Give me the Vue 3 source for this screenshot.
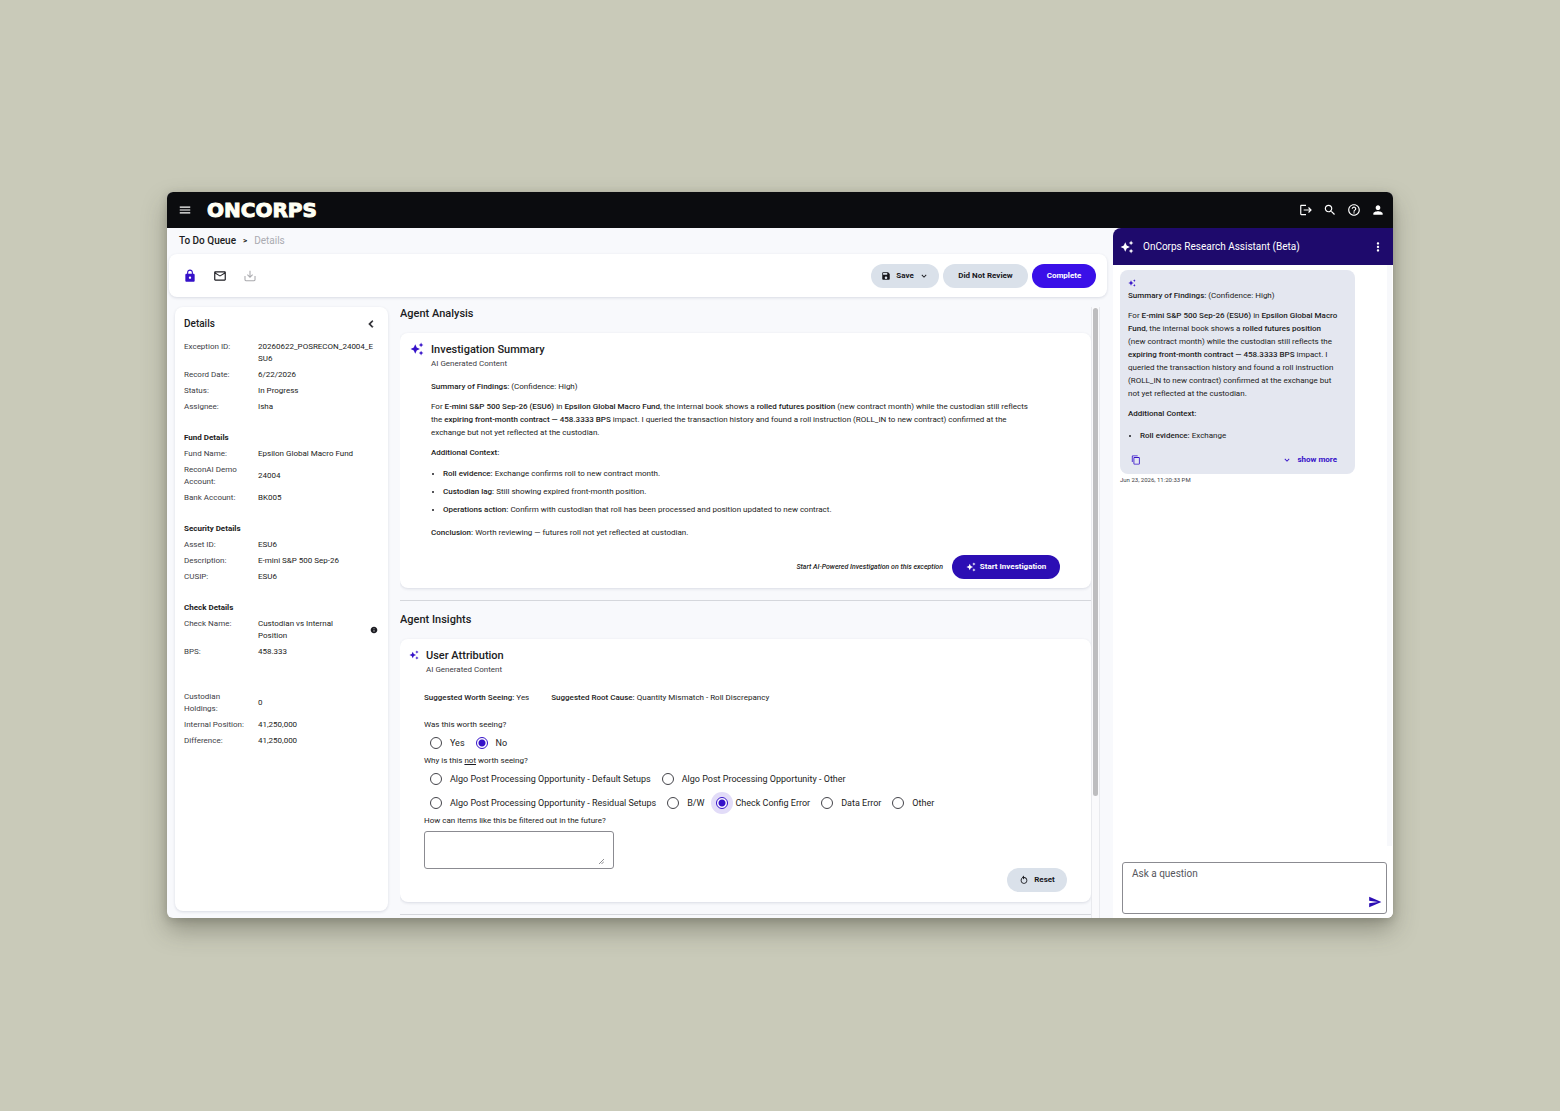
<script setup>
import { ref } from 'vue'

const icons = {
  menu: 'M3 18h18v-2H3v2zm0-5h18v-2H3v2zm0-7v2h18V6H3z',
  logout: 'M17 7l-1.41 1.41L18.17 11H8v2h10.17l-2.58 2.58L17 17l5-5zM4 5h8V3H4c-1.1 0-2 .9-2 2v14c0 1.1.9 2 2 2h8v-2H4V5z',
  search: 'M15.5 14h-.79l-.28-.27C15.41 12.59 16 11.11 16 9.5 16 5.91 13.09 3 9.5 3S3 5.91 3 9.5 5.91 16 9.5 16c1.61 0 3.09-.59 4.23-1.57l.27.28v.79l5 4.99L20.49 19l-4.99-5zm-6 0C7.01 14 5 11.99 5 9.5S7.01 5 9.5 5 14 7.01 14 9.5 11.99 14 9.5 14z',
  help: 'M11 18h2v-2h-2v2zm1-16C6.48 2 2 6.48 2 12s4.48 10 10 10 10-4.48 10-10S17.52 2 12 2zm0 18c-4.41 0-8-3.59-8-8s3.59-8 8-8 8 3.59 8 8-3.59 8-8 8zm0-14c-2.21 0-4 1.79-4 4h2c0-1.1.9-2 2-2s2 .9 2 2c0 2-3 1.75-3 5h2c0-2.25 3-2.5 3-5 0-2.21-1.79-4-4-4z',
  person: 'M12 12c2.21 0 4-1.79 4-4s-1.79-4-4-4-4 1.79-4 4 1.79 4 4 4zm0 2c-2.67 0-8 1.34-8 4v2h16v-2c0-2.66-5.33-4-8-4z',
  lock: 'M18 8h-1V6c0-2.76-2.24-5-5-5S7 3.24 7 6v2H6c-1.1 0-2 .9-2 2v10c0 1.1.9 2 2 2h12c1.1 0 2-.9 2-2V10c0-1.1-.9-2-2-2zm-6 9c-1.1 0-2-.9-2-2s.9-2 2-2 2 .9 2 2-.9 2-2 2zm3.1-9H8.9V6c0-1.71 1.39-3.1 3.1-3.1 1.71 0 3.1 1.39 3.1 3.1v2z',
  mail: 'M22 6c0-1.1-.9-2-2-2H4c-1.1 0-2 .9-2 2v12c0 1.1.9 2 2 2h16c1.1 0 2-.9 2-2V6zm-2 0l-8 5-8-5h16zm0 12H4V8l8 5 8-5v10z',
  download: 'M11.1 3h1.8v9.2l3-3 1.2 1.2-5.1 5.2-5.1-5.2 1.2-1.2 3 3zM2.5 12h1.8v6.2q0 1 1 1h13.4q1 0 1-1V12h1.8v6.5Q21.5 21 19 21H5Q2.5 21 2.5 18.5z',
  save: 'M17 3H5c-1.11 0-2 .9-2 2v14c0 1.1.89 2 2 2h14c1.1 0 2-.9 2-2V7l-4-4zm-5 16c-1.66 0-3-1.34-3-3s1.34-3 3-3 3 1.34 3 3-1.34 3-3 3zm3-10H5V5h10v4z',
  down: 'M16.59 8.59L12 13.17 7.41 8.59 6 10l6 6 6-6z',
  left: 'M15.41 7.41L14 6l-6 6 6 6 1.41-1.41L10.83 12z',
  more: 'M12 8c1.1 0 2-.9 2-2s-.9-2-2-2-2 .9-2 2 .9 2 2 2zm0 2c-1.1 0-2 .9-2 2s.9 2 2 2 2-.9 2-2-.9-2-2-2zm0 6c-1.1 0-2 .9-2 2s.9 2 2 2 2-.9 2-2-.9-2-2-2z',
  sparkle: 'M19 9l1.25-2.75L23 5l-2.75-1.25L19 1l-1.25 2.75L15 5l2.75 1.25L19 9zm-7.5.5L9 4 6.5 9.5 1 12l5.5 2.5L9 20l2.5-5.5L17 12l-5.5-2.5zM19 15l-1.25 2.75L15 19l2.75 1.25L19 23l1.25-2.75L23 19l-2.75-1.25L19 15z',
  info: 'M12 2C6.48 2 2 6.48 2 12s4.48 10 10 10 10-4.48 10-10S17.52 2 12 2zm1 15h-2v-6h2v6zm0-8h-2V7h2v2z',
  copy: 'M16 1H4c-1.1 0-2 .9-2 2v14h2V3h12V1zm3 4H8c-1.1 0-2 .9-2 2v14c0 1.1.9 2 2 2h11c1.1 0 2-.9 2-2V7c0-1.1-.9-2-2-2zm0 16H8V7h11v14z',
  send: 'M2.01 21L23 12 2.01 3 2 10l15 2-15 2z',
  reset: 'M12 5V1L7 6l5 5V7c3.31 0 6 2.69 6 6s-2.69 6-6 6-6-2.69-6-6c0-1.65.67-3.15 1.76-4.24L6.34 7.34A7.98 7.98 0 0 0 4 13c0 4.42 3.58 8 8 8s8-3.58 8-8-3.58-8-8-8z',
}

const groups = [
  { title: '', rows: [
    ['Exception ID:', '20260622_POSRECON_24004_ESU6'],
    ['Record Date:', '6/22/2026'],
    ['Status:', 'In Progress'],
    ['Assignee:', 'Isha'],
  ] },
  { title: 'Fund Details', rows: [
    ['Fund Name:', 'Epsilon Global Macro Fund'],
    ['ReconAI Demo Account:', '24004'],
    ['Bank Account:', 'BK005'],
  ] },
  { title: 'Security Details', rows: [
    ['Asset ID:', 'ESU6'],
    ['Description:', 'E-mini S&P 500 Sep-26'],
    ['CUSIP:', 'ESU6'],
  ] },
  { title: 'Check Details', rows: [
    ['Check Name:', 'Custodian vs Internal Position', true],
    ['BPS:', '458.333'],
  ] },
  { title: '', rows: [
    ['Custodian Holdings:', '0'],
    ['Internal Position:', '41,250,000'],
    ['Difference:', '41,250,000'],
  ] },
]

const reasonRows = [
  ['Algo Post Processing Opportunity - Default Setups', 'Algo Post Processing Opportunity - Other'],
  ['Algo Post Processing Opportunity - Residual Setups', 'B/W', 'Check Config Error', 'Data Error', 'Other'],
]

const worth = ref('No')
const reason = ref('Check Config Error')
const feedback = ref('')
const question = ref('')
</script>

<template>
  <div class="stage">
    <div class="window">
      <header class="topbar">
        <button class="icon-btn" aria-label="Menu"><svg class="i14" viewBox="0 0 24 24"><path :d="icons.menu" /></svg></button>
        <span class="logo">ONCORPS</span>
        <nav class="top-actions">
          <button v-for="n in ['logout', 'search', 'help', 'person']" :key="n" class="icon-btn" :aria-label="n">
            <svg class="i14" viewBox="0 0 24 24"><path :d="icons[n]" /></svg>
          </button>
        </nav>
      </header>

      <div class="body">
        <section class="workspace">
          <nav class="crumbs"><a href="#">To Do Queue</a><b>&gt;</b><span>Details</span></nav>

          <div class="toolbar">
            <div class="tools">
              <button class="icon-btn accent" aria-label="Lock"><svg class="i14" viewBox="0 0 24 24"><path :d="icons.lock" /></svg></button>
              <button class="icon-btn" aria-label="Mail"><svg class="i14" viewBox="0 0 24 24"><path :d="icons.mail" /></svg></button>
              <button class="icon-btn faded" aria-label="Download"><svg class="i14" viewBox="0 0 24 24"><path :d="icons.download" /></svg></button>
            </div>
            <div class="actions">
              <button class="pill save">
                <svg class="i10" viewBox="0 0 24 24"><path :d="icons.save" /></svg>Save
                <svg class="i10" viewBox="0 0 24 24"><path :d="icons.down" /></svg>
              </button>
              <button class="pill review">Did Not Review</button>
              <button class="pill complete">Complete</button>
            </div>
          </div>

          <div class="columns">
            <aside class="details">
              <div class="details-head">
                <h2>Details</h2>
                <button class="icon-btn" aria-label="Collapse"><svg class="i14" viewBox="0 0 24 24"><path :d="icons.left" stroke="currentColor" /></svg></button>
              </div>
              <div v-for="(g, i) in groups" :key="i" class="group" :class="{ spaced: i === 4 }">
                <h3 v-if="g.title">{{ g.title }}</h3>
                <dl>
                  <div v-for="r in g.rows" :key="r[0]" class="row">
                    <dt>{{ r[0] }}</dt>
                    <dd :class="{ short: r[2], code: r[1].length === 28 }">{{ r[1] }}</dd>
                    <svg v-if="r[2]" class="i8" viewBox="0 0 24 24"><path :d="icons.info" /></svg>
                  </div>
                </dl>
              </div>
            </aside>

            <main class="content">
              <h2 class="section-title">Agent Analysis</h2>
              <article class="card analysis">
                <svg class="i14 accent" viewBox="0 0 24 24"><path :d="icons.sparkle" /></svg>
                <div class="card-main">
                  <h3 class="card-title">Investigation Summary</h3>
                  <p class="subtitle">AI Generated Content</p>
                  <div class="prose">
                    <p><strong>Summary of Findings:</strong> (Confidence: High)</p>
                    <p>For <strong>E-mini S&amp;P 500 Sep-26 (ESU6)</strong> in <strong>Epsilon Global Macro Fund</strong>, the internal book shows a <strong>rolled futures position</strong> (new contract month) while the custodian still reflects the <strong>expiring front-month contract — 458.3333 BPS</strong> impact. I queried the transaction history and found a roll instruction (ROLL_IN to new contract) confirmed at the exchange but not yet reflected at the custodian.</p>
                    <p><strong>Additional Context:</strong></p>
                    <ul>
                      <li><strong>Roll evidence:</strong> Exchange confirms roll to new contract month.</li>
                      <li><strong>Custodian lag:</strong> Still showing expired front-month position.</li>
                      <li><strong>Operations action:</strong> Confirm with custodian that roll has been processed and position updated to new contract.</li>
                    </ul>
                    <p><strong>Conclusion:</strong> Worth reviewing — futures roll not yet reflected at custodian.</p>
                  </div>
                  <div class="launch">
                    <em>Start AI-Powered Investigation on this exception</em>
                    <button class="pill start"><svg class="i10" viewBox="0 0 24 24"><path :d="icons.sparkle" /></svg>Start Investigation</button>
                  </div>
                </div>
              </article>

              <hr />
              <h2 class="section-title">Agent Insights</h2>
              <article class="card insights">
                <div class="insights-head">
                  <svg class="i10 accent" viewBox="0 0 24 24"><path :d="icons.sparkle" /></svg>
                  <div>
                    <h3 class="card-title">User Attribution</h3>
                    <p class="subtitle">AI Generated Content</p>
                  </div>
                </div>
                <form class="form" @submit.prevent>
                  <p class="suggestions">
                    <span><strong>Suggested Worth Seeing:</strong> Yes</span>
                    <span><strong>Suggested Root Cause:</strong> Quantity Mismatch - Roll Discrepancy</span>
                  </p>
                  <p class="question">Was this worth seeing?</p>
                  <div class="radios">
                    <label v-for="o in ['Yes', 'No']" :key="o"><input v-model="worth" type="radio" name="worth" :value="o" />{{ o }}</label>
                  </div>
                  <p class="question">Why is this <u>not</u> worth seeing?</p>
                  <div v-for="(r, i) in reasonRows" :key="i" class="radios">
                    <label v-for="o in r" :key="o"><input v-model="reason" type="radio" name="reason" class="halo" :value="o" />{{ o }}</label>
                  </div>
                  <label class="question" for="feedback">How can items like this be filtered out in the future?</label>
                  <div class="feedback">
                    <textarea id="feedback" v-model="feedback"></textarea>
                    <svg viewBox="0 0 6 6"><path d="M0 6L6 0M3 6L6 3" /></svg>
                  </div>
                  <button class="pill reset" type="reset"><svg class="i10" viewBox="0 0 24 24"><path :d="icons.reset" /></svg>Reset</button>
                </form>
              </article>
              <hr />
            </main>
            <div class="track"><div class="thumb"></div></div>
          </div>
        </section>

        <aside class="assistant">
          <div class="assistant-head">
            <svg class="i14" viewBox="0 0 24 24"><path :d="icons.sparkle" /></svg>
            <h2>OnCorps Research Assistant (Beta)</h2>
            <button class="icon-btn" aria-label="More"><svg class="i14" viewBox="0 0 24 24"><path :d="icons.more" /></svg></button>
          </div>
          <div class="thread">
            <div class="messages">
              <div class="bubble prose">
                <svg class="i8 accent" viewBox="0 0 24 24"><path :d="icons.sparkle" /></svg>
                <p><strong>Summary of Findings:</strong> (Confidence: High)</p>
                <p>For <strong>E-mini S&amp;P 500 Sep-26 (ESU6)</strong> in <strong>Epsilon Global Macro Fund</strong>, the internal book shows a <strong>rolled futures position</strong> (new contract month) while the custodian still reflects the <strong>expiring front-month contract — 458.3333 BPS</strong> impact. I queried the transaction history and found a roll instruction (ROLL_IN to new contract) confirmed at the exchange but not yet reflected at the custodian.</p>
                <p><strong>Additional Context:</strong></p>
                <ul><li><strong>Roll evidence:</strong> Exchange</li></ul>
                <div class="bubble-foot">
                  <button class="icon-btn accent" aria-label="Copy"><svg class="i10" viewBox="0 0 24 24"><path :d="icons.copy" /></svg></button>
                  <button class="show-more"><svg class="i10" viewBox="0 0 24 24"><path :d="icons.down" /></svg>show more</button>
                </div>
              </div>
              <time>Jun 23, 2026, 11:20:33 PM</time>
            </div>
          </div>
          <div class="ask">
            <textarea v-model="question" aria-label="Ask a question" placeholder="Ask a question"></textarea>
            <button class="icon-btn send" aria-label="Send"><svg class="i14" viewBox="0 0 24 24"><path :d="icons.send" /></svg></button>
          </div>
        </aside>
      </div>
    </div>
  </div>
</template>

<style>
body { background: #c9cab9; }
</style>

<style scoped>
* { box-sizing: border-box; margin: 0; padding: 0; }
.stage { display: flex; height: 100vh; min-height: 1111px; padding: 192px 167px 193px; background: #c9cab9; font: 8px/12px Roboto, sans-serif; color: #1c1c22; }
.window { flex: 1; min-width: 0; display: flex; flex-direction: column; border-radius: 6px; overflow: hidden; background: #f8f9fc; box-shadow: 0 12px 24px rgba(50, 50, 40, .36), 0 2px 8px rgba(50, 50, 40, .2); }
svg { display: block; fill: currentColor; flex: none; }
.i14 { width: 14px; height: 14px; }
.i10 { width: 10px; height: 10px; }
.i8 { width: 8px; height: 8px; }
button { font: inherit; color: inherit; border: 0; background: none; cursor: pointer; }
.icon-btn { display: flex; }
.accent { color: #3511c9; }
h2, h3, strong { font-weight: 500; }

.topbar { flex: none; display: flex; align-items: center; height: 36px; padding: 0 8px 0 11px; background: #0b0c0f; color: #fff; }
.logo { margin-left: 15px; font: 700 20px/20px "DejaVu Sans", sans-serif; color: #fffff4; -webkit-text-stroke: 1px #fffff4; }
.top-actions { display: flex; gap: 10px; margin-left: auto; }

.body { flex: 1; min-height: 0; display: flex; }
.workspace { flex: 1; min-width: 0; display: flex; flex-direction: column; }
.crumbs { display: flex; gap: 7px; padding: 7px 12px; font-size: 10px; font-weight: 500; }
.crumbs a { color: inherit; text-decoration: none; }
.crumbs b { font-size: 8px; }
.crumbs span { color: #aaabb1; font-weight: 400; }
.toolbar { flex: none; display: flex; align-items: center; justify-content: space-between; height: 43px; margin: 0 6px 0 2px; padding: 0 11px 0 14px; border-radius: 8px; background: #fff; box-shadow: 0 1px 3px rgba(30, 40, 80, .14); }
.tools { display: flex; align-items: center; gap: 16px; }
.faded { color: #a9a9ad; }
.actions { display: flex; gap: 4px; }
.pill { display: flex; align-items: center; justify-content: center; height: 24px; border-radius: 12px; background: #dae1ea; color: #17171c; font-weight: 700; white-space: nowrap; }
.save { width: 68px; gap: 5px; }
.review { width: 85px; }
.complete { width: 64px; background: #3a10e8; color: #fff; }

.columns { flex: 1; min-height: 0; display: flex; padding: 10px 13px 0 8px; }
.details { flex: none; width: 213px; margin-bottom: 7px; padding: 9px 10px 9px 9px; border-radius: 8px; background: #fff; box-shadow: 0 1px 3px rgba(30, 40, 80, .14); }
.details-head { display: flex; align-items: center; justify-content: space-between; height: 16px; margin-bottom: 9px; }
.details-head h2 { font-size: 10px; }
.group { margin-bottom: 19px; }
.group h3 { font-size: 8px; font-weight: 700; margin-bottom: 4px; }
.spaced { margin-top: 33px; }
dl { display: flex; flex-direction: column; gap: 4px; }
.row { display: flex; align-items: center; }
dt { flex: none; align-self: flex-start; width: 74px; padding-right: 8px; color: #3d3d45; }
dd { flex: 1; }
.code { padding-right: 3px; word-break: break-all; }
.short { padding-right: 28px; }

.content { flex: 1; min-width: 0; margin-left: 12px; overflow: hidden; }
.section-title { font-size: 11px; line-height: 14px; margin-bottom: 12px; }
.card { border-radius: 8px; background: #fff; box-shadow: 0 1px 3px rgba(30, 40, 80, .14); }
.card-title { font-size: 11px; line-height: 16px; }
.subtitle { color: #3d3d45; }
.analysis { display: flex; gap: 7px; padding: 9px 31px 9px 10px; }
.card-main { flex: 1; }
.prose { line-height: 13px; }
.prose p + p { margin-top: 7px; }
.prose ul { padding-left: 12px; }
.analysis .prose { padding: 10px 24px 0 0; }
.analysis ul { margin: 6px 0 7px; line-height: 18px; }
.launch { display: flex; align-items: center; justify-content: flex-end; gap: 9px; margin-top: 16px; }
.launch em { font-size: 7px; font-weight: 500; }
.start { width: 108px; gap: 4px; background: #2c0eb4; color: #fff; }
hr { height: 1px; margin: 12px 0; border: 0; background: #d5d7dc; }

.insights { padding: 9px 24px 10px 9px; }
.insights-head { display: flex; gap: 7px; }
.insights-head svg { margin-top: 2px; }
.form { padding-left: 15px; }
.suggestions { display: flex; gap: 22px; padding: 16px 0 15px; }
.question { display: block; }
.radios { display: flex; align-items: center; gap: 11px; height: 24px; padding-left: 6px; font-size: 9px; }
.radios label { display: flex; align-items: center; gap: 8px; }
.radios input { appearance: none; width: 12px; height: 12px; border: 1px solid #44444a; border-radius: 50%; }
.radios input:checked { border-color: #3511c9; background: radial-gradient(circle, #3511c9 3px, transparent 4px); }
.radios .halo:checked { box-shadow: 0 0 0 5px #e2dcf8; background-color: #fff; }
.feedback { display: grid; width: 190px; height: 38px; margin-top: 4px; }
.feedback textarea { grid-area: 1 / 1; border: 1px solid #8b8b91; border-radius: 3px; resize: none; font: inherit; background: #fff; }
.feedback svg { grid-area: 1 / 1; align-self: end; justify-self: end; width: 5px; height: 5px; margin: 0 10px 5px 0; fill: none; stroke: #77777c; pointer-events: none; }
.reset { width: 60px; gap: 5px; margin: -1px 0 0 auto; }

.track { flex: none; width: 9px; border: solid #e9eaee; border-width: 0 1px; padding: 1px 1px 0 1px; background: #fafafc; }
.thumb { height: 80%; border-radius: 3px; background: #bdbdbf; }

.assistant { flex: none; width: 280px; display: flex; flex-direction: column; background: #fff; border-top-left-radius: 8px; overflow: hidden; }
.assistant-head { flex: none; display: flex; align-items: center; height: 37px; padding: 0 8px 0 7px; background: #1e0a6c; color: #fff; }
.assistant-head h2 { flex: 1; margin-left: 9px; font-size: 10px; font-weight: 400; }
.thread { flex: 1; display: flex; margin: 0 1px 16px 0; border-right: 5px solid #f7f8fb; }
.messages { padding: 5px 0 0 7px; }
.bubble { width: 235px; padding: 9px 16px 8px 8px; border-radius: 8px; background: #e4e7f0; }
.bubble svg + p { margin-top: 2px; }
.bubble ul { margin-top: 9px; }
.bubble-foot { display: flex; align-items: center; justify-content: space-between; margin-top: 11px; padding: 0 2px 0 3px; }
.show-more { display: flex; align-items: center; gap: 5px; color: #3511c9; font-weight: 700; }
time { display: block; font-size: 6px; color: #3d3d45; }
.ask { flex: none; display: grid; height: 52px; margin: 0 6px 4px 9px; }
.ask textarea { grid-area: 1 / 1; padding: 5px 9px; border: 1px solid #8b8b91; border-radius: 3px; resize: none; font: 10px/12px Roboto, sans-serif; color: #1c1c22; }
.ask textarea::placeholder { color: #55555c; opacity: 1; }
.send { grid-area: 1 / 1; align-self: end; justify-self: end; margin: 0 5px 5px 0; color: #2c0eb4; }
</style>
